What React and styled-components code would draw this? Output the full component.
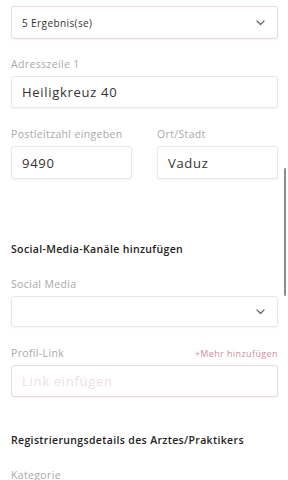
import React from 'react'
import styled, { createGlobalStyle } from 'styled-components'

const Global = createGlobalStyle`
  html, body { margin: 0; padding: 0; background: #fff; }
  body { font-family: "Open Sans", "Noto Sans", sans-serif; overflow: hidden; }
  * { box-sizing: border-box; }
`

const Page = styled.div`
  width: 288px;
  height: 480px;
  padding: 6px 10px 0 11px;
  overflow: hidden;
  position: relative;
`

const Field = styled.div`
  display: flex;
  flex-direction: column;
  margin-top: ${p => p.top || 0}px;
  flex: 1;
`

const Row = styled.div`
  display: flex;
  gap: 25px;
  margin-top: ${p => p.top || 0}px;
`

const LabelRow = styled.div`
  display: flex;
  justify-content: space-between;
  align-items: baseline;
  height: 14px;
  margin-bottom: 5px;
`

const Label = styled.span`
  font-size: 10.5px;
  line-height: 14px;
  color: #a9a9a9;
  letter-spacing: 0.35px;
  white-space: nowrap;
`

const AddMore = styled.span`
  font-size: 9px;
  line-height: 14px;
  color: #d28d9c;
  letter-spacing: 0.4px;
`

const Box = styled.div`
  height: ${p => p.h || 32}px;
  border: 1px solid ${p => (p.pink ? '#ead9dd' : '#ebe6e7')};
  border-radius: 3px;
  box-shadow: 0 1px 2px rgba(0, 0, 0, 0.05);
  display: flex;
  align-items: center;
  justify-content: space-between;
  padding: 0 12px 0 10px;
  background: #fff;
`

const Value = styled.span`
  font-size: ${p => p.size || 13}px;
  letter-spacing: ${p => p.spacing ?? 0.7}px;
  color: ${p => (p.placeholder ? '#eedfe3' : '#333')};
  font-weight: ${p => p.weight || 400};
`

const Heading = styled.h3`
  margin: ${p => p.top || 0}px 0 0;
  font-size: 10.5px;
  line-height: 14px;
  font-weight: 600;
  letter-spacing: 0.35px;
  color: #222;
  white-space: nowrap;
`

const Scrollbar = styled.div`
  position: absolute;
  right: 2px;
  top: 168px;
  width: 2px;
  height: 128px;
  background: #8c8c8c;
  border-radius: 1px;
`

const Chevron = () => (
  <svg width="9" height="6" viewBox="0 0 9 6" fill="none">
    <polyline points="1,1 4.5,4.5 8,1" stroke="#666" strokeWidth="1.2" strokeLinecap="round" strokeLinejoin="round" />
  </svg>
)

export default function App() {
  return (
    <Page>
      <Global />
      <Box h={33} pink>
        <Value size={10} spacing={0.4} weight={500}>5 Ergebnis(se)</Value>
        <Chevron />
      </Box>

      <Field top={18}>
        <LabelRow><Label>Adresszeile 1</Label></LabelRow>
        <Box><Value>Heiligkreuz 40</Value></Box>
      </Field>

      <Row top={19}>
        <Field>
          <LabelRow><Label>Postleitzahl eingeben</Label></LabelRow>
          <Box h={33}><Value>9490</Value></Box>
        </Field>
        <Field>
          <LabelRow><Label>Ort/Stadt</Label></LabelRow>
          <Box h={33}><Value>Vaduz</Value></Box>
        </Field>
      </Row>

      <Heading top={63}>Social-Media-Kanäle hinzufügen</Heading>

      <Field top={21}>
        <LabelRow><Label>Social Media</Label></LabelRow>
        <Box h={31}><span /><Chevron /></Box>
      </Field>

      <Field top={19}>
        <LabelRow>
          <Label>Profil-Link</Label>
          <AddMore>+Mehr hinzufügen</AddMore>
        </LabelRow>
        <Box pink><Value placeholder="1">Link einfügen</Value></Box>
      </Field>

      <Heading top={36}>Registrierungsdetails des Arztes/Praktikers</Heading>

      <Field top={21}>
        <LabelRow><Label>Kategorie</Label></LabelRow>
      </Field>

      <Scrollbar />
    </Page>
  )
}
